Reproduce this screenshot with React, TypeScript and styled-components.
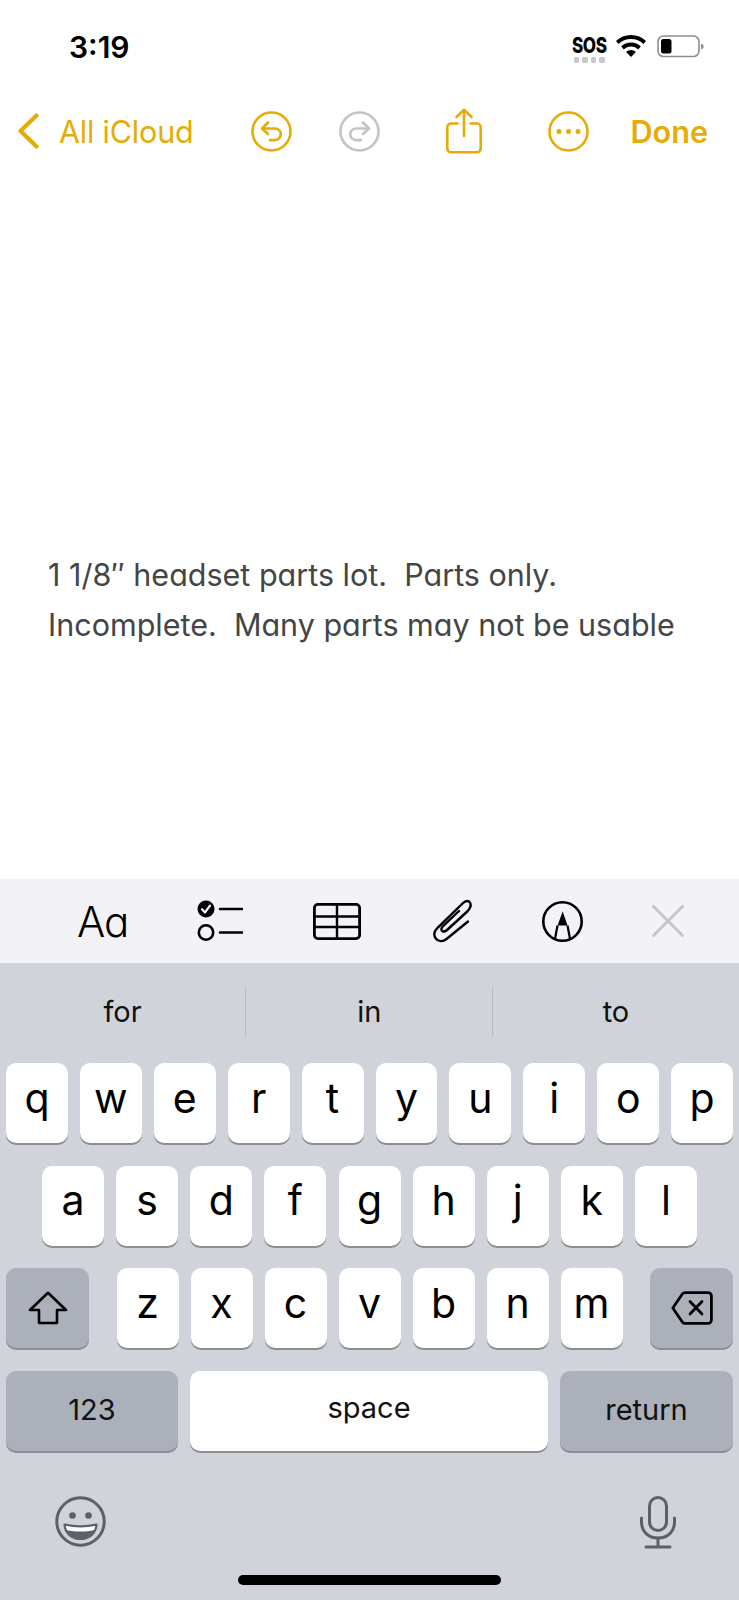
import React from "react";
import styled, { createGlobalStyle } from "styled-components";

const FONT = `Inter, "Liberation Sans", sans-serif`;
const GOLD = "#e5ac07";

const Global = createGlobalStyle`
  html, body { margin: 0; padding: 0; background: #fff; }
  body { font-family: ${FONT}; }
  svg { display: block; flex: none; }
`;

const Screen = styled.div`
  width: 739px;
  height: 1600px;
  display: flex;
  flex-direction: column;
  overflow: hidden;
  background: #fff;
`;

const StatusBar = styled.div`
  height: 107.5px;
  box-sizing: border-box;
  padding: 29px 35px 0 69px;
  display: flex;
  justify-content: space-between;
  align-items: flex-start;
`;

const Time = styled.div`
  font-size: 30px;
  line-height: 36px;
  font-weight: 600;
  color: #000;
`;

const StatusIcons = styled.div`
  display: flex;
  align-items: flex-start;
  gap: 10px;
  padding-top: 6px;
`;

const SosBlock = styled.div`
  width: 34px;
  display: flex;
  flex-direction: column;
  align-items: center;
  gap: 2px;
`;

const SosText = styled.div`
  font-size: 22px;
  line-height: 20px;
  font-weight: 800;
  color: #000;
  transform: scaleX(0.78);
  letter-spacing: -0.5px;
`;

const SosDots = styled.div`
  display: flex;
  gap: 3px;
`;

const SosDot = styled.span`
  width: 5.5px;
  height: 5.5px;
  border-radius: 1.5px;
  background: #c9c9cb;
`;

const WifiSlot = styled.div`
  margin-right: 1px;
`;

const NavBar = styled.div`
  height: 47px;
  padding-left: 18px;
  display: flex;
  align-items: center;
`;

const NavSlot = styled.div<{ $gap: number }>`
  margin-left: ${(p) => p.$gap}px;
  display: flex;
  align-items: center;
`;

const BackLabel = styled.span`
  font-size: 30.5px;
  font-weight: 400;
  color: ${GOLD};
  letter-spacing: -0.2px;
`;

const DoneLabel = styled.span`
  font-size: 30.7px;
  font-weight: 600;
  color: ${GOLD};
`;

const NoteArea = styled.div`
  flex: 1;
  padding: 395.5px 48px 0;
`;

const NoteText = styled.p`
  margin: 0;
  font-size: 30.5px;
  line-height: 49.5px;
  font-weight: 400;
  color: #454545;
  white-space: pre-wrap;
  font-feature-settings: "cv11" 1;
`;

const Accessory = styled.div`
  height: 84px;
  background: #f2f2f7;
  display: flex;
  align-items: center;
  padding-left: 77px;
`;

const AaLabel = styled.span`
  font-size: 42px;
  font-weight: 300;
  color: #000;
  font-feature-settings: "cv11" 1;
  letter-spacing: -1px;
`;

const AccessorySlot = styled.div<{ $gap: number }>`
  margin-left: ${(p) => p.$gap}px;
`;

const Keyboard = styled.div`
  flex: none;
  height: 637px;
  box-sizing: border-box;
  background: #d0d3da;
  display: flex;
  flex-direction: column;
`;

const Suggestions = styled.div`
  height: 100px;
  padding-bottom: 4px;
  box-sizing: border-box;
  display: flex;
  align-items: center;
`;

const Suggestion = styled.div`
  flex: 1;
  text-align: center;
  font-size: 29px;
  line-height: 48px;
  color: #111;
  padding-top: 1px;
  margin-left: -0.5px;
  & + & {
    border-left: 1.5px solid #b7bac2;
  }
`;

const Rows = styled.div`
  display: flex;
  flex-direction: column;
  gap: 22.7px;
  padding: 0 6px;
`;

const Row = styled.div<{ $inset?: number }>`
  display: flex;
  gap: 12px;
  height: 80px;
  padding: 0 ${(p) => p.$inset ?? 0}px;
  justify-content: space-between;
`;

const KeyGroup = styled.div`
  display: flex;
  gap: 12px;
`;

const LetterKey = styled.div`
  width: 62px;
  height: 80px;
  box-sizing: border-box;
  padding-bottom: 11px;
  background: #fff;
  border-radius: 10px;
  box-shadow: 0 2px 0 #8d8e92;
  display: flex;
  align-items: center;
  justify-content: center;
  font-size: 41px;
  font-weight: 400;
  color: #000;
`;

const ActionKey = styled.div<{ $w: number; $light?: boolean; $lift?: number }>`
  width: ${(p) => p.$w}px;
  height: 80px;
  box-sizing: border-box;
  padding-bottom: ${(p) => p.$lift ?? 0}px;
  background: ${(p) => (p.$light ? "#fff" : "#abb0bb")};
  border-radius: 10px;
  box-shadow: 0 2px 0 #8d8e92;
  display: flex;
  align-items: center;
  justify-content: center;
  font-size: 29px;
  color: #111;
`;

const BottomRow = styled.div`
  flex: 1;
  display: flex;
  justify-content: space-between;
  padding: 45px 63px 0 55px;
`;

const HomeBar = styled.div`
  width: 263px;
  height: 10px;
  border-radius: 5px;
  background: #000;
  margin: 0 auto 15px;
`;

const Undo = ({ color, flip }: { color: string; flip?: boolean }) => (
  <svg width="41" height="41" viewBox="0 0 41 41" fill="none" stroke={color} strokeWidth="2.6" strokeLinecap="round" strokeLinejoin="round">
    <circle cx="20.5" cy="20.5" r="19" />
    <g transform={flip ? "translate(41 0) scale(-1 1)" : undefined}>
      <path d="M17 11.5 L11 17.5 L17 23" />
      <path d="M11.5 17.5 H24 a5.8 5.8 0 0 1 0 11.6 H19" />
    </g>
  </svg>
);

const Wifi = () => (
  <svg width="30" height="22" viewBox="0 0 30 22" fill="#000">
    <path d="M15 0C9 0 4 2.3 0 6l2.6 2.9C5.8 5.8 10.1 4 15 4s9.2 1.8 12.4 4.9L30 6C26 2.3 21 0 15 0z" />
    <path d="M15 7.4c-3.9 0-7.3 1.5-9.8 4l2.7 3c1.8-1.8 4.3-2.9 7.1-2.9s5.3 1.1 7.1 2.9l2.7-3c-2.5-2.5-5.9-4-9.8-4z" />
    <path d="M15 15c-2 0-3.7.8-4.9 2l4.9 5 4.9-5c-1.2-1.2-2.9-2-4.9-2z" />
  </svg>
);

const Battery = () => (
  <svg width="47" height="23" viewBox="0 0 47 23" fill="none">
    <rect x="1" y="1" width="41" height="20.5" rx="5.5" stroke="#8e8e8e" strokeWidth="1.6" />
    <rect x="4" y="4" width="10.5" height="14.5" rx="2.5" fill="#000" />
    <path d="M44 8.5 L46.5 10 V13 L44 14.5z" fill="#8e8e8e" />
  </svg>
);

const Back = () => (
  <svg width="21" height="36" viewBox="0 0 21 36" fill="none" stroke={GOLD} strokeWidth="4.2" strokeLinecap="round" strokeLinejoin="round">
    <path d="M18.5 2.5 L2.5 18 L18.5 33.5" />
  </svg>
);

const Share = () => (
  <svg width="36" height="46" viewBox="0 0 36 46" fill="none" stroke={GOLD} strokeWidth="2.6" strokeLinecap="round" strokeLinejoin="round">
    <path d="M11.5 15.5 H5 a3.7 3.7 0 0 0-3.7 3.7 V40.6 a3.7 3.7 0 0 0 3.7 3.7 H31 a3.7 3.7 0 0 0 3.7-3.7 V19.2 a3.7 3.7 0 0 0-3.7-3.7 H24.5" />
    <path d="M18 28 V2" />
    <path d="M10.5 9 L18 1.6 L25.5 9" />
  </svg>
);

const More = () => (
  <svg width="41" height="41" viewBox="0 0 41 41" fill="none">
    <circle cx="20.5" cy="20.5" r="19" stroke={GOLD} strokeWidth="2.6" />
    <circle cx="11" cy="20.5" r="2.5" fill={GOLD} />
    <circle cx="20.5" cy="20.5" r="2.5" fill={GOLD} />
    <circle cx="30" cy="20.5" r="2.5" fill={GOLD} />
  </svg>
);

const Checklist = () => (
  <svg width="46" height="42" viewBox="0 0 46 42" fill="none">
    <circle cx="9" cy="9" r="8.5" fill="#000" />
    <path d="M5 9.2 L8 12.4 L13 5.6" stroke="#fff" strokeWidth="2.2" strokeLinecap="round" strokeLinejoin="round" />
    <circle cx="9" cy="32.5" r="7.2" stroke="#000" strokeWidth="2.6" />
    <path d="M23 9 H45 M23 32.5 H45" stroke="#000" strokeWidth="2.6" strokeLinecap="round" />
  </svg>
);

const Table = () => (
  <svg width="48" height="37" viewBox="0 0 48 37" fill="none" stroke="#000" strokeWidth="2.8">
    <rect x="1.4" y="1.4" width="45.2" height="34.2" rx="3.5" />
    <path d="M1.3 13.5 H46.7 M1.3 24 H46.7 M24 1.3 V35.7" strokeWidth="2.4" />
  </svg>
);

const Clip = () => (
  <svg width="39" height="44" viewBox="0 0 39 44" fill="none" stroke="#000" strokeWidth="2.4" strokeLinecap="round" strokeLinejoin="round">
    <path d="M35 22.5 L13.5 40 C9.5 43.3 5 42.5 2.8 39.5 C0.3 36.2 1 32 4.5 28.8 L28 6 C31 2.3 34.5 0.8 36.5 3 C38.5 5.3 37.5 9 34.3 12.5 L14 31 C12 32.8 10 33 9 31.8 C8 30.5 8.5 28.5 10.3 26.8 L26 12" />
  </svg>
);

const Markup = () => (
  <svg width="41" height="41" viewBox="0 0 41 41" fill="none">
    <circle cx="20.5" cy="20.5" r="19.2" stroke="#000" strokeWidth="2.6" />
    <path d="M20.7 10.5 L25.5 24.5 H15.5z" fill="#000" />
    <path d="M15.5 24.5 L12.8 39 M25.5 24.5 L28.2 39" stroke="#000" strokeWidth="2.2" />
  </svg>
);

const Close = () => (
  <svg width="32" height="32" viewBox="0 0 32 32" fill="none" stroke="#c5c5c8" strokeWidth="2.8" strokeLinecap="round">
    <path d="M1.5 1.5 L30.5 30.5 M30.5 1.5 L1.5 30.5" />
  </svg>
);

const ShiftIcon = () => (
  <svg width="40" height="34" viewBox="0 0 40 34" fill="none" stroke="#000" strokeWidth="2.6" strokeLinejoin="round">
    <path d="M20 1.8 L38 19 H29 V32 H11 V19 H2z" />
  </svg>
);

const DeleteIcon = () => (
  <svg width="42" height="34" viewBox="0 0 42 34" fill="none" stroke="#000" strokeWidth="2.8" strokeLinecap="round" strokeLinejoin="round">
    <path d="M14 1.6 H37 a3.4 3.4 0 0 1 3.4 3.4 V29 a3.4 3.4 0 0 1-3.4 3.4 H14 a3.4 3.4 0 0 1-2.5-1.1 L1.8 17 L11.5 2.7 A3.4 3.4 0 0 1 14 1.6z" />
    <path d="M19 10.5 L31 23 M31 10.5 L19 23" />
  </svg>
);

const Emoji = () => (
  <svg width="51" height="51" viewBox="0 0 51 51" fill="none">
    <circle cx="25.5" cy="25.5" r="23.7" stroke="#5b606b" strokeWidth="3" />
    <circle cx="17.5" cy="19.5" r="3.3" fill="#5b606b" />
    <circle cx="33.5" cy="19.5" r="3.3" fill="#5b606b" />
    <path d="M9.5 28.5 C19 30.7 32 30.7 41.5 28.5 C41 37.5 34 43 25.5 43 C17 43 10 37.5 9.5 28.5z" stroke="#5b606b" strokeWidth="2.2" strokeLinejoin="round" fill="#fff" />
    <path d="M11.5 34 C20 36 31 36 39.5 34 C37 39.5 31.5 43 25.5 43 C19.5 43 14 39.5 11.5 34z" fill="#5b606b" />
  </svg>
);

const Mic = () => (
  <svg width="36" height="53" viewBox="0 0 36 53" fill="none" stroke="#5b606b" strokeWidth="3" strokeLinecap="round">
    <rect x="9.5" y="1.5" width="17" height="33" rx="8.5" />
    <path d="M1.5 22 V26 C1.5 35.5 8.5 42 18 42 C27.5 42 34.5 35.5 34.5 26 V22" />
    <path d="M18 42 V51 M6 51 H30" />
  </svg>
);

const rowOne = ["q", "w", "e", "r", "t", "y", "u", "i", "o", "p"];
const rowTwo = ["a", "s", "d", "f", "g", "h", "j", "k", "l"];
const rowThree = ["z", "x", "c", "v", "b", "n", "m"];

export default function App() {
  return (
    <Screen>
      <Global />
      <StatusBar>
        <Time>3:19</Time>
        <StatusIcons>
          <SosBlock>
            <SosText>SOS</SosText>
            <SosDots>
              <SosDot />
              <SosDot />
              <SosDot />
              <SosDot />
            </SosDots>
          </SosBlock>
          <WifiSlot>
            <Wifi />
          </WifiSlot>
          <Battery />
        </StatusIcons>
      </StatusBar>
      <NavBar>
        <Back />
        <NavSlot $gap={20}>
          <BackLabel>All iCloud</BackLabel>
        </NavSlot>
        <NavSlot $gap={58}>
          <Undo color={GOLD} />
        </NavSlot>
        <NavSlot $gap={47}>
          <Undo color="#c4c4c6" flip />
        </NavSlot>
        <NavSlot $gap={66}>
          <Share />
        </NavSlot>
        <NavSlot $gap={66}>
          <More />
        </NavSlot>
        <NavSlot $gap={41}>
          <DoneLabel>Done</DoneLabel>
        </NavSlot>
      </NavBar>
      <NoteArea>
        <NoteText>{"1 1/8″ headset parts lot.  Parts only.\nIncomplete.  Many parts may not be usable"}</NoteText>
      </NoteArea>
      <Accessory>
        <AaLabel>Aa</AaLabel>
        <AccessorySlot $gap={69}>
          <Checklist />
        </AccessorySlot>
        <AccessorySlot $gap={70}>
          <Table />
        </AccessorySlot>
        <AccessorySlot $gap={72}>
          <Clip />
        </AccessorySlot>
        <AccessorySlot $gap={70}>
          <Markup />
        </AccessorySlot>
        <AccessorySlot $gap={69}>
          <Close />
        </AccessorySlot>
      </Accessory>
      <Keyboard>
        <Suggestions>
          <Suggestion>for</Suggestion>
          <Suggestion>in</Suggestion>
          <Suggestion>to</Suggestion>
        </Suggestions>
        <Rows>
          <Row>
            {rowOne.map((k) => (
              <LetterKey key={k}>{k}</LetterKey>
            ))}
          </Row>
          <Row $inset={36}>
            {rowTwo.map((k) => (
              <LetterKey key={k}>{k}</LetterKey>
            ))}
          </Row>
          <Row>
            <ActionKey $w={83}>
              <ShiftIcon />
            </ActionKey>
            <KeyGroup>
              {rowThree.map((k) => (
                <LetterKey key={k}>{k}</LetterKey>
              ))}
            </KeyGroup>
            <ActionKey $w={83}>
              <DeleteIcon />
            </ActionKey>
          </Row>
          <Row>
            <ActionKey $w={172} $lift={4}>
              123
            </ActionKey>
            <ActionKey $w={358} $light $lift={8}>
              space
            </ActionKey>
            <ActionKey $w={173} $lift={4}>
              return
            </ActionKey>
          </Row>
        </Rows>
        <BottomRow>
          <Emoji />
          <Mic />
        </BottomRow>
        <HomeBar />
      </Keyboard>
    </Screen>
  );
}
